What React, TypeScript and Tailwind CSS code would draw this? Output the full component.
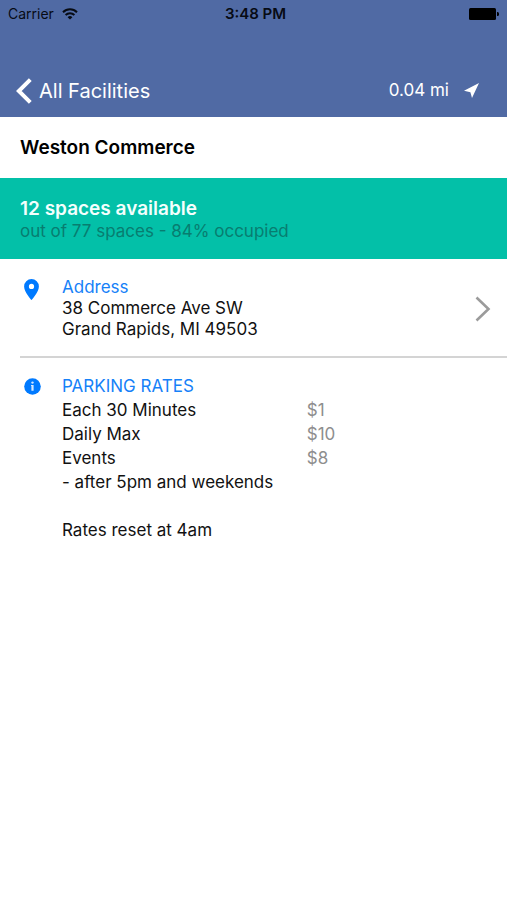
import React from 'react';

interface Rate {
  label: string;
  price?: string;
}

const rates: Rate[] = [
  { label: 'Each 30 Minutes', price: '$1' },
  { label: 'Daily Max', price: '$10' },
  { label: 'Events', price: '$8' },
  { label: '- after 5pm and weekends' },
];

function WifiIcon() {
  return (
    <svg width="16" height="12" viewBox="0 0 16 12" fill="none" stroke="currentColor" strokeWidth="2" aria-hidden="true">
      <path d="M1 4.2a10 10 0 0 1 14 0" />
      <path d="M3.6 7a6.3 6.3 0 0 1 8.8 0" />
      <path d="M8 11.6 5.6 9.2a3.4 3.4 0 0 1 4.8 0z" fill="currentColor" stroke="none" />
    </svg>
  );
}

function BatteryIcon() {
  return (
    <svg width="30" height="12" viewBox="0 0 30 12" fill="currentColor" aria-hidden="true">
      <rect width="27" height="12" rx="1.5" />
      <path d="M28 4h.5a1.5 1.5 0 0 1 1.5 1.5v1A1.5 1.5 0 0 1 28.5 8H28z" />
    </svg>
  );
}

function BackIcon() {
  return (
    <svg width="16" height="26" viewBox="0 0 16 26" fill="none" stroke="currentColor" strokeWidth="4" aria-hidden="true">
      <path d="M14.3 1.6 2.8 13l11.5 11.4" />
    </svg>
  );
}

function LocationArrow() {
  return (
    <svg width="15" height="15" viewBox="0 0 15 15" fill="currentColor" aria-hidden="true">
      <path d="M15 0 8 15 6.4 9.2 0 7.8z" />
    </svg>
  );
}

function PinIcon() {
  return (
    <svg width="15" height="21" viewBox="0 0 15 21" fill="currentColor" aria-hidden="true">
      <path fillRule="evenodd" d="M7.5 0A7.4 7.4 0 0 0 .1 7.4C.1 12.9 7.5 21 7.5 21s7.4-8.1 7.4-13.6A7.4 7.4 0 0 0 7.5 0zm0 4.8a2.6 2.6 0 1 1 0 5.2 2.6 2.6 0 0 1 0-5.2z" />
    </svg>
  );
}

function InfoIcon() {
  return (
    <svg width="17" height="17" viewBox="0 0 17 17" aria-hidden="true">
      <circle cx="8.5" cy="8.5" r="8.3" fill="currentColor" />
      <circle cx="8.5" cy="4.6" r="1.2" fill="#d4e8ff" />
      <path d="M7 7h2.600v5.800H7.400V8H7z" fill="#d4e8ff" />
    </svg>
  );
}

function Chevron() {
  return (
    <svg width="16" height="26" viewBox="0 0 16 26" fill="none" stroke="currentColor" strokeWidth="2.6" aria-hidden="true">
      <path d="M1.5 1.5 13.5 13l-12 11.500" />
    </svg>
  );
}

function StatusBar() {
  return (
    <div className="grid h-7 grid-cols-3 items-center px-2 text-sm leading-7 text-[#070b14]">
      <div className="flex items-center gap-2">
        <span>Carrier</span>
        <WifiIcon />
      </div>
      <span className="pl-1 text-center text-[15px] font-semibold">3:48 PM</span>
      <div className="flex justify-end text-black">
        <BatteryIcon />
      </div>
    </div>
  );
}

export default function App() {
  return (
    <div className="min-h-screen bg-white font-['Inter',sans-serif] text-[17px] text-[#111111]">
      <header className="bg-[#506aa4]">
        <StatusBar />
        <nav className="flex items-center justify-between pb-2 pl-4 pr-7 pt-11 text-white">
          <button type="button" className="flex h-[37px] items-center gap-[7px] text-xl">
            <BackIcon />
            All Facilities
          </button>
          <div className="flex items-center gap-[15px]">
            <span>0.04 mi</span>
            <LocationArrow />
          </div>
        </nav>
      </header>

      <main>
        <h1 className="px-5 pb-4 pt-[17px] text-[19px] font-semibold leading-7 text-black">Weston Commerce</h1>

        <section className="bg-[#03c0a8] px-5 pb-[17px] pt-5">
          <p className="text-[19px] font-semibold leading-[22px] text-[#f4fffd]">12 spaces available</p>
          <p className="leading-[22px] text-[#087d70]">out of 77 spaces - 84% occupied</p>
        </section>

        <a href="#directions" className="ml-5 flex border-b-2 border-[#d4d4d4] pb-4 pr-4 pt-[18px]">
          <span className="w-[42px] pl-1 pt-0.5 text-[#007aff]">
            <PinIcon />
          </span>
          <span className="flex-1 leading-[21px]">
            <span className="block text-[#1681f8]">Address</span>
            <span className="block">38 Commerce Ave SW</span>
            <span className="block">Grand Rapids, MI 49503</span>
          </span>
          <span className="self-center text-[#9b9b9b]">
            <Chevron />
          </span>
        </a>

        <section className="ml-5 flex pt-4">
          <div className="w-[42px] pl-1 pt-1 text-[#007aff]">
            <InfoIcon />
          </div>
          <div className="flex-1 leading-6">
            <h2 className="text-[#1681f8]">PARKING RATES</h2>
            <table className="w-full border-collapse text-left">
              <tbody>
                {rates.map((rate) => (
                  <tr key={rate.label}>
                    <th scope="row" className="w-[55%] p-0 font-normal">{rate.label}</th>
                    <td className="p-0 text-[#8e8e8e]">{rate.price}</td>
                  </tr>
                ))}
              </tbody>
            </table>
            <p className="pt-6">Rates reset at 4am</p>
          </div>
        </section>
      </main>
    </div>
  );
}
